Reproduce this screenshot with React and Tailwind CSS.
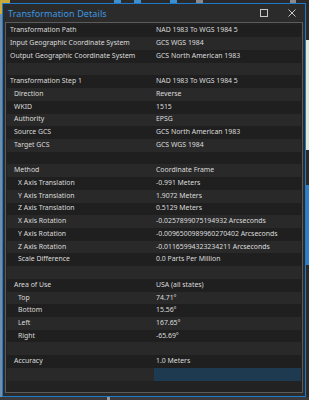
import React from "react";

const rows = [
  ["Transformation Path", "NAD 1983 To WGS 1984 5", 0],
  ["Input Geographic Coordinate System", "GCS WGS 1984", 0],
  ["Output Geographic Coordinate System", "GCS North American 1983", 0],
  ["", "", 0],
  ["Transformation Step 1", "NAD 1983 To WGS 1984 5", 0],
  ["Direction", "Reverse", 1],
  ["WKID", "1515", 1],
  ["Authority", "EPSG", 1],
  ["Source GCS", "GCS North American 1983", 1],
  ["Target GCS", "GCS WGS 1984", 1],
  ["", "", 0],
  ["Method", "Coordinate Frame", 1],
  ["X Axis Translation", "-0.991 Meters", 2],
  ["Y Axis Translation", "1.9072 Meters", 2],
  ["Z Axis Translation", "0.5129 Meters", 2],
  ["X Axis Rotation", "-0.0257899075194932 Arcseconds", 2],
  ["Y Axis Rotation", "-0.0096500989960270402 Arcseconds", 2],
  ["Z Axis Rotation", "-0.01165994323234211 Arcseconds", 2],
  ["Scale Difference", "0.0 Parts Per Million", 2],
  ["", "", 0],
  ["Area of Use", "USA (all states)", 1],
  ["Top", "74.71°", 2],
  ["Bottom", "15.56°", 2],
  ["Left", "167.65°", 2],
  ["Right", "-65.69°", 2],
  ["", "", 0],
  ["Accuracy", "1.0 Meters", 1],
  ["", "", 0, true],
];

const indentCls = ["pl-[3px]", "pl-[7px]", "pl-[11px]"];

export default function App() {
  return (
    <div
      className="w-[309px] h-[400px] overflow-hidden bg-[#3a3a3a] flex flex-col"
      style={{ fontFamily: '"Noto Sans", "Open Sans", sans-serif' }}
    >
      {/* background application: toolbar strip */}
      <div className="h-[3px] shrink-0 flex bg-[#2a2a2a]">
        <div className="w-[10px] bg-[#c9a93a]" />
        <div className="w-[104px]" />
        <div className="w-[7px] bg-[#3d8fd0]" />
        <div className="w-[13px]" />
        <div className="w-[7px] bg-[#3d8fd0]" />
        <div className="w-[29px]" />
        <div className="w-[7px] bg-[#3d8fd0]" />
        <div className="w-[19px]" />
        <div className="w-[7px] bg-[#8a8a8a]" />
        <div className="w-[87px]" />
        <div className="w-[6px] bg-[#8a8a8a]" />
      </div>

      <div className="flex h-[394px] shrink-0">
        {/* left sliver of app */}
        <div className="w-[2px] flex flex-col">
          <div className="h-[11px] bg-[#c9a93a]" />
          <div className="flex-1 bg-[#6d8fb0]" />
        </div>

        {/* dialog window */}
        <div className="w-[304px] border border-[#1e7ac9] bg-[#2b2b2b] flex flex-col">
          <div className="h-[18px] flex items-center pl-[5px] pr-[9px] shrink-0">
            <span className="text-[9px] text-[#3c98e2] leading-none tracking-[0.1px]">
              Transformation Details
            </span>
            <div className="ml-auto flex items-center gap-[20px]">
              <svg width="8" height="8" viewBox="0 0 8 8" className="block">
                <rect x="0.5" y="0.5" width="7" height="7" fill="none" stroke="#c8c8c8" strokeWidth="1" />
              </svg>
              <svg width="8" height="8" viewBox="0 0 8 8" className="block">
                <path d="M0.5 0.5 L7.5 7.5 M7.5 0.5 L0.5 7.5" stroke="#c8c8c8" strokeWidth="1" />
              </svg>
            </div>
          </div>
          <div className="mx-[2px] mb-[3px] flex-1 border border-[#5c5c5c] bg-[#222222] pt-[1.5px] px-[1px]">
            {rows.map(([label, value, indent, hl], i) => (
              <div
                key={i}
                className={`h-[12.73px] flex items-center text-[6.9px] leading-none text-[#dcdcdc] ${
                  i % 2 === 0 ? "bg-[#1f1f1f]" : "bg-[#292929]"
                }`}
              >
                <div className={`w-[147px] shrink-0 whitespace-nowrap ${indentCls[indent]}`}>{label}</div>
                <div
                  className={`flex-1 h-full flex items-center pl-[2px] whitespace-nowrap ${
                    hl ? "bg-[#1d3a50]" : ""
                  }`}
                >
                  {value}
                </div>
              </div>
            ))}
          </div>
        </div>

        {/* right sliver of app */}
        <div className="w-[3px] flex flex-col bg-[#2a2a2a]">
          <div className="h-[37px]" />
          <div className="h-[110px] bg-[#dfe8d6]" />
          <div className="h-[35px]" />
          <div className="h-[80px] bg-[#2f7fc8]" />
        </div>
      </div>

      {/* bottom strip of app */}
      <div className="flex-1 flex bg-[#3a3a3a]">
        <div className="w-[107px]" />
        <div className="w-[3px] bg-[#9a9a9a]" />
      </div>
    </div>
  );
}
